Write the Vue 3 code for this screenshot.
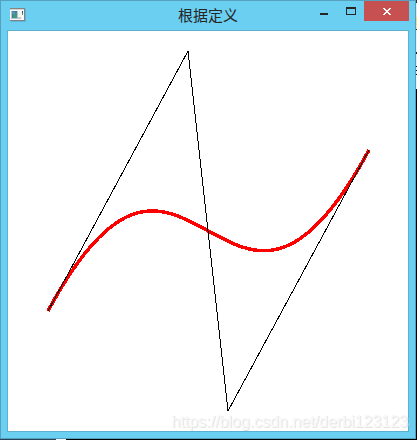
<script setup>
const size = 400
const points = [
  [40, 280],
  [180, 20],
  [220, 380],
  [361, 119],
]
const polygon = points.map(([x, y]) => `${x},${y}`).join(' ')
const [start, c1, c2, end] = points.map(([x, y]) => `${x} ${y}`)
const curve = `M${start} C${c1} ${c2} ${end}`
</script>

<template>
  <div class="desktop">
    <main class="window">
      <header class="titlebar">
        <svg class="app-icon" viewBox="0 0 16 14" shape-rendering="crispEdges" aria-hidden="true">
          <path d="M1 1h15v13H1z" fill="#5eb4d8" />
          <path d="M0 0h15v13H0z" fill="#848484" />
          <path d="M0 1h14v11H0z" fill="#f7f7f7" />
          <path d="M0 1h14v1H0z" fill="#d5d5d8" />
          <path d="M1 3h7v8H1z" fill="#b9c3ca" />
          <path d="M2 3h5v7H2z" fill="#3f80a0" />
          <path d="M3 5h4v5H3z" fill="#459586" />
          <path d="M2 4h3v2H2z" fill="#5c94b6" />
          <path d="M8 9h3v2H8z" fill="#c9c9c9" />
          <path d="M12 3h1v2h-1z" fill="#234f9c" />
          <path d="M12 5h1v2h-1z" fill="#37a253" />
        </svg>
        <h1 class="title">根据定义</h1>
        <div class="controls">
          <button class="control" type="button" aria-label="Minimize">
            <svg viewBox="0 0 27 20" shape-rendering="crispEdges">
              <path d="M10 12h8v2h-8z" fill="#262626" />
            </svg>
          </button>
          <button class="control" type="button" aria-label="Maximize">
            <svg viewBox="0 0 27 20" shape-rendering="crispEdges">
              <path d="M9 6h10v8H9zM10 8v5h8V8z" fill="#262626" fill-rule="evenodd" />
            </svg>
          </button>
          <button class="control close" type="button" aria-label="Close">
            <svg viewBox="0 0 45 20" shape-rendering="crispEdges">
              <path
                d="M19 7h2v1h1v1h2V8h1V7h2v1h-1v1h-1v1h-1v1h1v1h1v1h1v1h-2v-1h-1v-1h-2v1h-1v1h-2v-1h1v-1h1v-1h1v-1h-1V9h-1V8h-1z"
                fill="#fff"
              />
            </svg>
          </button>
        </div>
      </header>
      <section class="canvas">
        <svg class="plot" :viewBox="`0 0 ${size} ${size}`" shape-rendering="crispEdges" role="img" aria-label="Bezier curve">
          <path class="curve" :d="curve" />
          <polyline class="control-line" :points="polygon" />
        </svg>
        <span class="watermark">https://blog.csdn.net/derbi123123</span>
      </section>
    </main>
  </div>
</template>

<style>
body {
  margin: 0;
  background: #000;
}
</style>

<style scoped>
.desktop {
  box-sizing: border-box;
  min-height: 100vh;
  display: flex;
  padding: 0 1px 1px 0;
  background:
    linear-gradient(90deg, #24445a 56px, #f4f4f4 56px, #f4f4f4 66px, #000 66px) 0 100% / 100% 1px no-repeat,
    linear-gradient(
        #1c3854 3px, #dce9f5 3px, #dce9f5 17px, #f5d878 17px, #f8e6a8 29px, #222 29px, #222 30px,
        #e8f0f8 30px, #e8f0f8 52px, #222 52px, #222 54px, #dcebf7 54px, #dcebf7 66px,
        #111 66px, #111 67px, #dcebf7 67px, #dcebf7 70px, #111 70px, #111 71px,
        #dcebf7 71px, #dcebf7 74px, #111 74px, #111 75px, #e8f0f8 75px, #e8f0f8 89px, #000 89px
      ) 100% 0 / 1px 100% no-repeat,
    #000;
}

.window {
  box-sizing: border-box;
  flex: 1;
  display: flex;
  flex-direction: column;
  padding: 0 6px 6px;
  border: 1px solid #559fbf;
  background: #6bcff2;
}

.titlebar {
  display: grid;
  grid-template-columns: 1fr auto 1fr;
  align-items: start;
  height: 29px;
}

.app-icon {
  width: 16px;
  height: 14px;
  margin: 7px 0 0 3px;
}

.title {
  margin: 0;
  color: #262626;
  font: 400 15px/27px "Noto Sans CJK SC", sans-serif;
}

.controls {
  display: flex;
  justify-content: flex-end;
}

.control {
  width: 27px;
  height: 20px;
  padding: 0;
  border: 0;
  background: transparent;
}

.control svg {
  display: block;
  width: 100%;
  height: 100%;
}

.close {
  width: 45px;
  background: #c75050;
}

.canvas {
  position: relative;
  flex: 1;
  border: 1px solid #5cb0ce;
  background: #fff;
}

.plot {
  display: block;
  width: 100%;
}

.curve {
  fill: none;
  stroke: #f00;
  stroke-width: 3.5;
}

.control-line {
  fill: none;
  stroke: #000;
  stroke-width: 1;
}

.watermark {
  position: absolute;
  right: 0;
  bottom: 0;
  color: #f8f8f8;
  font: 16px/18px "Liberation Sans", Arial, sans-serif;
  text-shadow: 1px 1px 0 #e4e4e4;
}
</style>
